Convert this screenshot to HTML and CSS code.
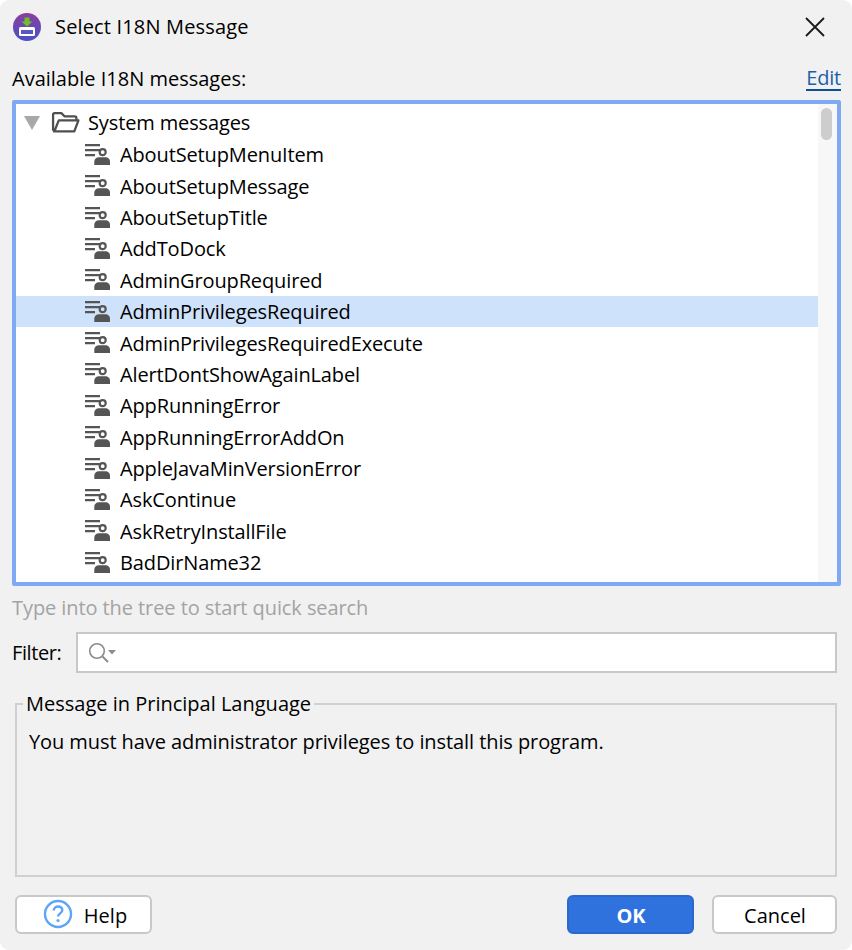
FILE: index.html
```html
<!DOCTYPE html>
<html lang="en">
<head>
<meta charset="utf-8">
<title>Select I18N Message</title>
<link rel="stylesheet" href="styles.css">
</head>
<body>
<div class="dialog">
  <header class="titlebar">
    <svg class="app-icon" width="28" height="28" viewBox="0 0 28 28">
      <defs><linearGradient id="g" x1="0" y1="0" x2="0" y2="1"><stop offset="0" stop-color="#8a3f9e"/><stop offset="1" stop-color="#4a50c8"/></linearGradient></defs>
      <circle cx="14" cy="14" r="14" fill="url(#g)"/>
      <path d="M11.500 4.500h5v4h3l-5.500 5-5.500-5h3z" fill="#6cc02c"/>
      <rect x="6" y="14" width="16" height="9" rx="1.500" fill="#fff"/>
      <rect x="8" y="17" width="12" height="4" fill="#5a56c4"/>
    </svg>
    <span class="title">Select I18N Message</span>
    <svg class="close" width="20" height="20" viewBox="0 0 20 20"><path d="M1 1l18 18M19 1L1 19" stroke="#1a1a1a" stroke-width="1.800" fill="none"/></svg>
  </header>
  <div class="label-row">
    <span>Available I18N messages:</span>
    <a class="edit">Edit</a>
  </div>
  <div class="tree">
    <div class="tree-list">
      <div class="row root">
        <svg class="arrow" width="16" height="14" viewBox="0 0 16 14"><path d="M0 0h16L8 14z" fill="#a8a8a8"/></svg>
        <svg class="folder" width="29" height="23" viewBox="0 0 28 22"><path d="M2 19V3.500C2 2.600 2.600 2 3.500 2h6.500l3 3h10c.8 0 1.500.7 1.500 1.500V9M2 19.500h20.500L26.500 9H7.500L3.500 19" fill="none" stroke="#4f4f4f" stroke-width="2.200" stroke-linejoin="round"/></svg>
        <span>System messages</span>
      </div>
      <div class="row"><svg class="msg"><use href="#m"/></svg><span>AboutSetupMenuItem</span></div>
      <div class="row"><svg class="msg"><use href="#m"/></svg><span>AboutSetupMessage</span></div>
      <div class="row"><svg class="msg"><use href="#m"/></svg><span>AboutSetupTitle</span></div>
      <div class="row"><svg class="msg"><use href="#m"/></svg><span>AddToDock</span></div>
      <div class="row"><svg class="msg"><use href="#m"/></svg><span>AdminGroupRequired</span></div>
      <div class="row selected"><svg class="msg"><use href="#m"/></svg><span>AdminPrivilegesRequired</span></div>
      <div class="row"><svg class="msg"><use href="#m"/></svg><span>AdminPrivilegesRequiredExecute</span></div>
      <div class="row"><svg class="msg"><use href="#m"/></svg><span>AlertDontShowAgainLabel</span></div>
      <div class="row"><svg class="msg"><use href="#m"/></svg><span>AppRunningError</span></div>
      <div class="row"><svg class="msg"><use href="#m"/></svg><span>AppRunningErrorAddOn</span></div>
      <div class="row"><svg class="msg"><use href="#m"/></svg><span>AppleJavaMinVersionError</span></div>
      <div class="row"><svg class="msg"><use href="#m"/></svg><span>AskContinue</span></div>
      <div class="row"><svg class="msg"><use href="#m"/></svg><span>AskRetryInstallFile</span></div>
      <div class="row"><svg class="msg"><use href="#m"/></svg><span>BadDirName32</span></div>
    </div>
    <div class="scrollbar"><div class="thumb"></div></div>
  </div>
  <div class="hint">Type into the tree to start quick search</div>
  <div class="filter-row">
    <label>Filter:</label>
    <div class="filter-input">
      <svg width="32" height="24" viewBox="0 0 32 24"><circle cx="10" cy="10" r="7.300" fill="none" stroke="#8c8c8c" stroke-width="1.600"/><path d="M15.500 15.500l5.500 5.500" stroke="#8c8c8c" stroke-width="2"/><path d="M21 9h8l-4 4.500z" fill="#8c8c8c"/></svg>
    </div>
  </div>
  <fieldset class="group">
    <legend>Message in Principal Language</legend>
    <p>You must have administrator privileges to install this program.</p>
  </fieldset>
  <footer class="buttons">
    <button class="btn help">
      <svg width="30" height="30" viewBox="0 0 30 30"><circle cx="15" cy="15" r="13" fill="none" stroke="#5ea5f7" stroke-width="2.400"/><path d="M10.800 11.500c0-2.500 1.900-4 4.300-4s4.200 1.500 4.200 3.700c0 3.100-4.200 3.300-4.200 6.300" fill="none" stroke="#5ea5f7" stroke-width="2.400"/><circle cx="15" cy="21.500" r="1.600" fill="#5ea5f7"/></svg>
      <span>Help</span>
    </button>
    <button class="btn ok">OK</button>
    <button class="btn cancel">Cancel</button>
  </footer>
</div>
<svg class="defs" width="0" height="0">
  <symbol id="m" viewBox="0 0 27 24">
    <path d="M1 2.200h15M1 7.200h15M1 12.200h10" stroke="#555" stroke-width="2.200" fill="none"/>
    <circle cx="18.700" cy="9.200" r="3" fill="none" stroke="#555" stroke-width="2.200"/>
    <path d="M10.300 22v-3.500c0-2.500 2.200-4.300 4.500-4.300h6.700c2.300 0 4.500 1.800 4.500 4.300V22z" fill="#555"/>
  </symbol>
</svg>
</body>
</html>
```
FILE: styles.css
```css
* { box-sizing: border-box; }
html, body { margin: 0; padding: 0; background: #fff; }
body {
  width: 852px;
  height: 950px;
  font-family: "Open Sans", "Noto Sans", sans-serif;
  font-size: 20px;
  color: #000;
  overflow: hidden;
}
.dialog {
  width: 852px;
  height: 950px;
  background: #f1f1f1;
  border-radius: 9px;
  display: flex;
  flex-direction: column;
  padding: 0 11px 0 12px;
}
.titlebar {
  height: 53px;
  display: flex;
  align-items: center;
  flex: none;
}
.app-icon { margin-left: 1px; flex: none; }
.title { margin-left: 14px; letter-spacing: 0.16px; }
.close { margin-left: auto; margin-right: 16px; }
.label-row {
  height: 47px;
  display: flex;
  justify-content: space-between;
  align-items: center;
  flex: none;
  padding-top: 4px;
}
.edit {
  color: #1a5fa8;
  border-bottom: 2px solid #0a4f9a;
  line-height: 23px;
  letter-spacing: -0.2px;
}
.tree {
  height: 486px;
  border: 4px solid #7fa9f2;
  border-radius: 2px;
  background: #fff;
  display: flex;
  flex: none;
  overflow: hidden;
}
.tree-list { flex: 1; padding-top: 3.700px; letter-spacing: -0.13px; }
.row {
  height: 31.380px;
  display: flex;
  align-items: center;
  padding-left: 68px;
  white-space: nowrap;
}
.row.root { padding-left: 8px; padding-bottom: 1px; }
.row.selected { background: #cfe2fc; }
.arrow { flex: none; }
.folder { flex: none; margin-left: 11px; margin-right: 8px; }
.msg { width: 27px; height: 24px; flex: none; margin-right: 9px; }
.scrollbar { width: 19px; background: #f7f7f7; padding: 4px 5px 0 3px; flex: none; }
.thumb { height: 32px; background: #cdcdcd; border-radius: 6px; }
.hint {
  color: #a3a3a3;
  height: 46px;
  line-height: 44px;
  flex: none;
  letter-spacing: -0.08px;
}
.filter-row {
  display: flex;
  align-items: center;
  height: 41px;
  flex: none;
}
.filter-row label { width: 64px; flex: none; letter-spacing: -0.4px; }
.filter-input {
  flex: 1;
  height: 41px;
  background: #fff;
  border: 2px solid #c8c8c8;
  display: flex;
  align-items: center;
  padding-left: 9px;
  margin-right: 4px;
}
.group {
  margin: 17px 4px 0 3px;
  padding: 0 12px;
  height: 187px;
  border: 2px solid #d0d0d0;
  flex: none;
  min-width: 0;
}
.group legend { padding: 0 3px; line-height: 27px; margin-left: -6px; }
.group p { margin: 11px 0 0; line-height: 27px; letter-spacing: -0.08px; }
.buttons {
  display: flex;
  align-items: center;
  margin: 17px 4px 0 3px;
  height: 40px;
  flex: none;
}
.btn {
  font: inherit;
  height: 39px;
  border: 2px solid #c8c8c8;
  border-radius: 6px;
  background: #fff;
  color: #000;
  padding: 2px 0 0 1px;
  display: flex;
  align-items: center;
  justify-content: center;
}
.help { width: 137px; gap: 11px; margin-right: auto; padding-left: 3px; }
.help svg { margin-top: -2px; }
.ok { width: 127px; background: #2f72de; border-color: #2b68cc; color: #fff; font-weight: 700; }
.cancel { width: 125px; margin-left: 18px; }
.defs { position: absolute; }
```
